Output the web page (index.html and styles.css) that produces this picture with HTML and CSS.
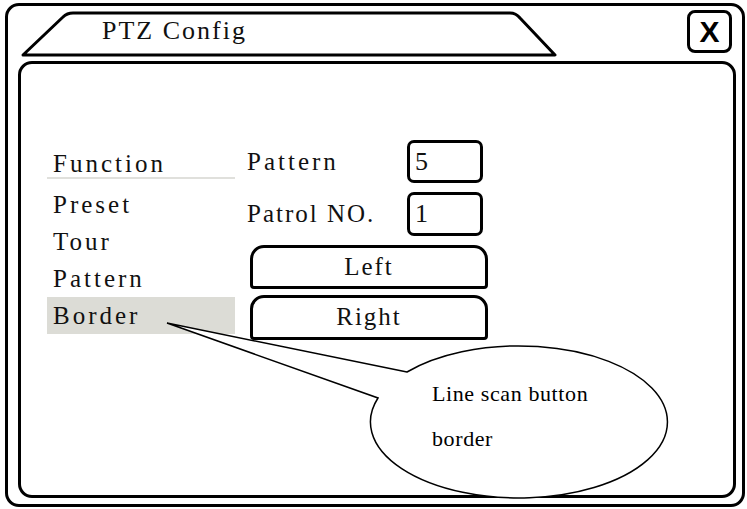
FILE: index.html
```html
<!DOCTYPE html>
<html lang="en">
<head>
    <meta charset="UTF-8">
    <meta name="viewport" content="width=device-width, initial-scale=1.0">
    <title>PTZ Config</title>
    <link rel="stylesheet" href="styles.css">
</head>
<body>
    <div class="window">
        <div class="titlebar">
            <div class="tab">
                <svg class="tab-shape" viewBox="0 0 536 46">
                    <path d="M2 44 L42 6 Q46 2 52 2 L489 2 Q495 2 499 7 L534 44 Z" />
                </svg>
                <span class="tab-title">PTZ Config</span>
            </div>
            <div class="close">X</div>
        </div>

        <div class="panel">
            <ul class="menu">
                <li class="menu-head">Function</li>
                <li>Preset</li>
                <li>Tour</li>
                <li>Pattern</li>
                <li class="active">Border</li>
            </ul>

            <div class="form">
                <div class="field">
                    <span class="field-label">Pattern</span>
                    <span class="field-box">5</span>
                </div>
                <div class="field field-tall">
                    <span class="field-label">Patrol NO.</span>
                    <span class="field-box">1</span>
                </div>
                <div class="btn">Left</div>
                <div class="btn btn-second">Right</div>
            </div>
        </div>
    </div>

    <!-- Annotation bubble pointing at the Border item -->
    <svg class="callout" viewBox="0 0 747 509">
        <path d="M407 372 L167 323 L378 398 A148.5 76 0 1 0 407 372 Z" />
        <text x="432" y="401">Line scan button</text>
        <text x="432" y="446">border</text>
    </svg>
</body>
</html>
```

FILE: styles.css
```css
body {
    margin: 0;
    padding: 0;
    width: 747px;
    height: 509px;
    position: relative;
    overflow: hidden;
    background-color: #fff;
    font-family: "Liberation Serif", "Times New Roman", serif;
    color: #111;
}

.window {
    box-sizing: border-box;
    width: 740px;
    height: 504px;
    margin: 3px 0 0 5px;
    border: 3px solid #000;
    border-radius: 14px;
    display: flex;
    flex-direction: column;
}

.titlebar {
    height: 55px;
    display: flex;
    align-items: flex-start;
    flex-shrink: 0;
}

.tab {
    position: relative;
    width: 536px;
    height: 46px;
    margin: 5px 0 0 13px;
}

.tab-shape {
    position: absolute;
    left: 0;
    top: 0;
    width: 536px;
    height: 46px;
}

.tab-shape path {
    fill: #fff;
    stroke: #000;
    stroke-width: 3;
    stroke-linejoin: round;
}

.tab-title {
    position: relative;
    display: block;
    padding-left: 81px;
    font-size: 26px;
    line-height: 40px;
    letter-spacing: 2px;
}

.close {
    box-sizing: border-box;
    width: 45px;
    height: 43px;
    margin: 4px 10px 0 auto;
    border: 3px solid #000;
    border-radius: 8px;
    display: flex;
    align-items: center;
    justify-content: center;
    font-family: "Liberation Sans", Arial, sans-serif;
    font-weight: bold;
    font-size: 30px;
    color: #000;
}

.panel {
    flex: 1;
    margin: 0 6px 6px 10px;
    border: 3px solid #000;
    border-radius: 14px;
    display: flex;
    align-items: flex-start;
    padding: 76px 0 0 26px;
}

.menu {
    list-style: none;
    margin: 11px 0 0 0;
    padding: 0;
    width: 188px;
    font-size: 25px;
    letter-spacing: 3px;
}

.menu li {
    line-height: 37px;
    padding-left: 6px;
}

.menu .menu-head {
    line-height: 26px;
    border-bottom: 2px solid #e0e0dc;
    margin-bottom: 7px;
}

.menu .active {
    background-color: #dcdcd6;
}

.form {
    margin-left: 12px;
    width: 241px;
    font-size: 25px;
}

.field {
    display: flex;
    align-items: center;
    height: 43px;
    margin-bottom: 9px;
}

.field-tall {
    height: 44px;
}

.field-label {
    width: 160px;
    letter-spacing: 3px;
}

.field-tall .field-label {
    letter-spacing: 2px;
}

.field-box {
    box-sizing: border-box;
    width: 76px;
    height: 100%;
    border: 3px solid #000;
    border-radius: 7px;
    padding-left: 5px;
    font-size: 26px;
    line-height: 37px;
}

.btn {
    box-sizing: border-box;
    width: 238px;
    height: 44px;
    margin-left: 3px;
    border: 3px solid #000;
    border-radius: 14px 14px 4px 4px;
    text-align: center;
    line-height: 38px;
    letter-spacing: 2px;
}

.btn-second {
    height: 45px;
    margin-top: 6px;
}

.callout {
    position: absolute;
    left: 0;
    top: 0;
    width: 747px;
    height: 509px;
    pointer-events: none;
}

.callout path {
    fill: #fff;
    stroke: #000;
    stroke-width: 1.5;
    stroke-linejoin: miter;
}

.callout text {
    font-family: "Liberation Serif", "Times New Roman", serif;
    font-size: 22px;
    letter-spacing: 0.6px;
    fill: #000;
}
```
